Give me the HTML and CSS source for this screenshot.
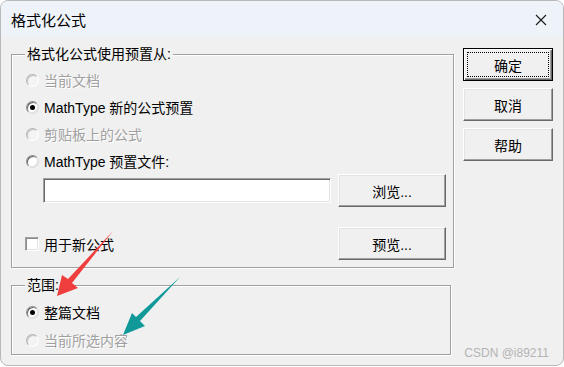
FILE: index.html
```html
<!DOCTYPE html>
<html lang="zh-CN">
<head>
    <meta charset="UTF-8">
    <meta name="viewport" content="width=device-width, initial-scale=1.0">
    <title>格式化公式</title>
    <link rel="stylesheet" href="styles.css">
</head>
<body>
    <div class="window">
        <div class="titlebar">
            <span class="title">格式化公式</span>
            <svg class="close" width="12" height="12" viewBox="0 0 12 12">
                <path d="M1 1 L11 11 M11 1 L1 11" stroke="#1a1a1a" stroke-width="1.1" fill="none"/>
            </svg>
        </div>

        <div class="content">
            <div class="left">
                <fieldset class="group group-preset">
                    <legend>格式化公式使用预置从:</legend>
                    <div class="opt disabled"><span class="radio"></span>当前文档</div>
                    <div class="opt"><span class="radio checked"></span>MathType 新的公式预置</div>
                    <div class="opt disabled"><span class="radio"></span>剪贴板上的公式</div>
                    <div class="opt"><span class="radio"></span>MathType 预置文件:</div>
                    <div class="file-row">
                        <input class="field" type="text">
                        <button class="btn">浏览...</button>
                    </div>
                    <div class="preview-row">
                        <label class="check"><span class="box"></span>用于新公式</label>
                        <button class="btn">预览...</button>
                    </div>
                </fieldset>

                <fieldset class="group group-range">
                    <legend>范围:</legend>
                    <div class="opt first"><span class="radio checked"></span>整篇文档</div>
                    <div class="opt disabled"><span class="radio"></span>当前所选内容</div>
                </fieldset>
            </div>

            <div class="actions">
                <button class="btn btn-default">确定</button>
                <button class="btn">取消</button>
                <button class="btn">帮助</button>
            </div>
        </div>

        <!-- annotation arrows drawn over the dialog -->
        <svg class="arrows" width="564" height="367" viewBox="0 0 564 367">
            <polygon fill="#f03e3e" points="113,231 72,283 78,288 57,296 62,275 68,279"/>
            <polygon fill="#11999a" points="180,277 140,321 145,326 123,335 132,313 136,317"/>
        </svg>

        <div class="watermark">CSDN @i89211</div>
    </div>
</body>
</html>
```

FILE: styles.css
```css
* {
    box-sizing: border-box;
}
body {
    margin: 0;
    background: #fff;
    font-family: "Liberation Sans", "Noto Sans CJK SC", sans-serif;
    font-size: 14px;
    color: #000;
}
.window {
    position: relative;
    width: 564px;
    height: 366px;
    border: 1px solid #b9b9b9;
    border-radius: 8px;
    background: #f0f0f0;
    overflow: hidden;
}
.titlebar {
    height: 36px;
    display: flex;
    align-items: center;
    justify-content: space-between;
    padding: 0 16px 0 10px;
    background: #eef2f9;
}
.title {
    font-size: 15px;
}
.close {
    margin-top: 2px;
}
.content {
    display: flex;
    align-items: flex-start;
    padding: 9px 0 0 10px;
}
.left {
    width: 443px;
}
.group {
    margin: 0;
    min-width: 0;
    border: 1px solid #a0a0a0;
    box-shadow: inset 1px 1px 0 #fff, 1px 1px 0 #fff;
    padding: 0 7px 7px 13px;
}
.group legend {
    padding: 0 2px;
    line-height: 17px;
    background: #f0f0f0;
}
.group-range {
    width: 440px;
    margin-top: 9px;
    padding-bottom: 4px;
}
.opt {
    display: flex;
    align-items: center;
    height: 20px;
    margin-top: 7px;
}
.group-range .opt {
    margin-top: 8px;
}
.disabled {
    color: #a0a0a0;
    text-shadow: 1px 1px 0 #fff;
}
.radio {
    position: relative;
    width: 13px;
    height: 13px;
    margin: 0 5px 0 1px;
    border-radius: 50%;
    border: 1px solid;
    border-color: #8c8c8c #dcdcdc #dcdcdc #8c8c8c;
    box-shadow: inset 1px 1px 0 #696969, inset -1px -1px 0 #e3e3e3;
    background: #fff;
}
.disabled .radio {
    border-color: #b4b4b4 #fff #fff #b4b4b4;
    box-shadow: inset 1px 1px 0 #c8c8c8;
    background: #f4f4f4;
}
.radio.checked::after {
    content: "";
    position: absolute;
    left: 3px;
    top: 3px;
    width: 5px;
    height: 5px;
    border-radius: 50%;
    background: #000;
}
.file-row {
    display: flex;
    align-items: center;
    margin-top: 3px;
}
.field {
    width: 288px;
    height: 25px;
    margin: 0 7px 0 18px;
    border: 1px solid;
    border-color: #a0a0a0 #fff #fff #a0a0a0;
    box-shadow: inset 1px 1px 0 #696969, inset -1px -1px 0 #e3e3e3;
    background: #fff;
    padding: 0 3px;
    outline: none;
}
.preview-row {
    display: flex;
    align-items: center;
    justify-content: space-between;
    margin-top: 20px;
}
.check {
    display: flex;
    align-items: center;
}
.box {
    width: 14px;
    height: 14px;
    margin-right: 5px;
    border: 1px solid;
    border-color: #a0a0a0 #fff #fff #a0a0a0;
    box-shadow: inset 1px 1px 0 #8c8c8c, inset -1px -1px 0 #e3e3e3;
    background: #fff;
}
.btn {
    position: relative;
    width: 108px;
    height: 33px;
    padding: 0;
    font: inherit;
    color: #000;
    background: #f0f0f0;
    border: 1px solid;
    border-color: #fff #696969 #696969 #fff;
    box-shadow: inset -1px -1px 0 #a0a0a0, inset 1px 1px 0 #e3e3e3;
}
.actions {
    display: flex;
    flex-direction: column;
    gap: 7px;
    margin-left: 9px;
    padding-top: 2px;
}
.actions .btn {
    width: 90px;
}
.btn-default {
    border-color: #000;
    box-shadow: inset 1px 1px 0 #fff, inset -1px -1px 0 #696969, inset -2px -2px 0 #a0a0a0;
}
.btn-default::after {
    content: "";
    position: absolute;
    top: 3px;
    left: 3px;
    right: 3px;
    bottom: 3px;
    border: 1px dotted #000;
}
.arrows {
    position: absolute;
    top: -1px;
    left: -1px;
    pointer-events: none;
}
.watermark {
    position: absolute;
    right: 14px;
    top: 345px;
    font-size: 12px;
    color: #b4b4b4;
}
```
